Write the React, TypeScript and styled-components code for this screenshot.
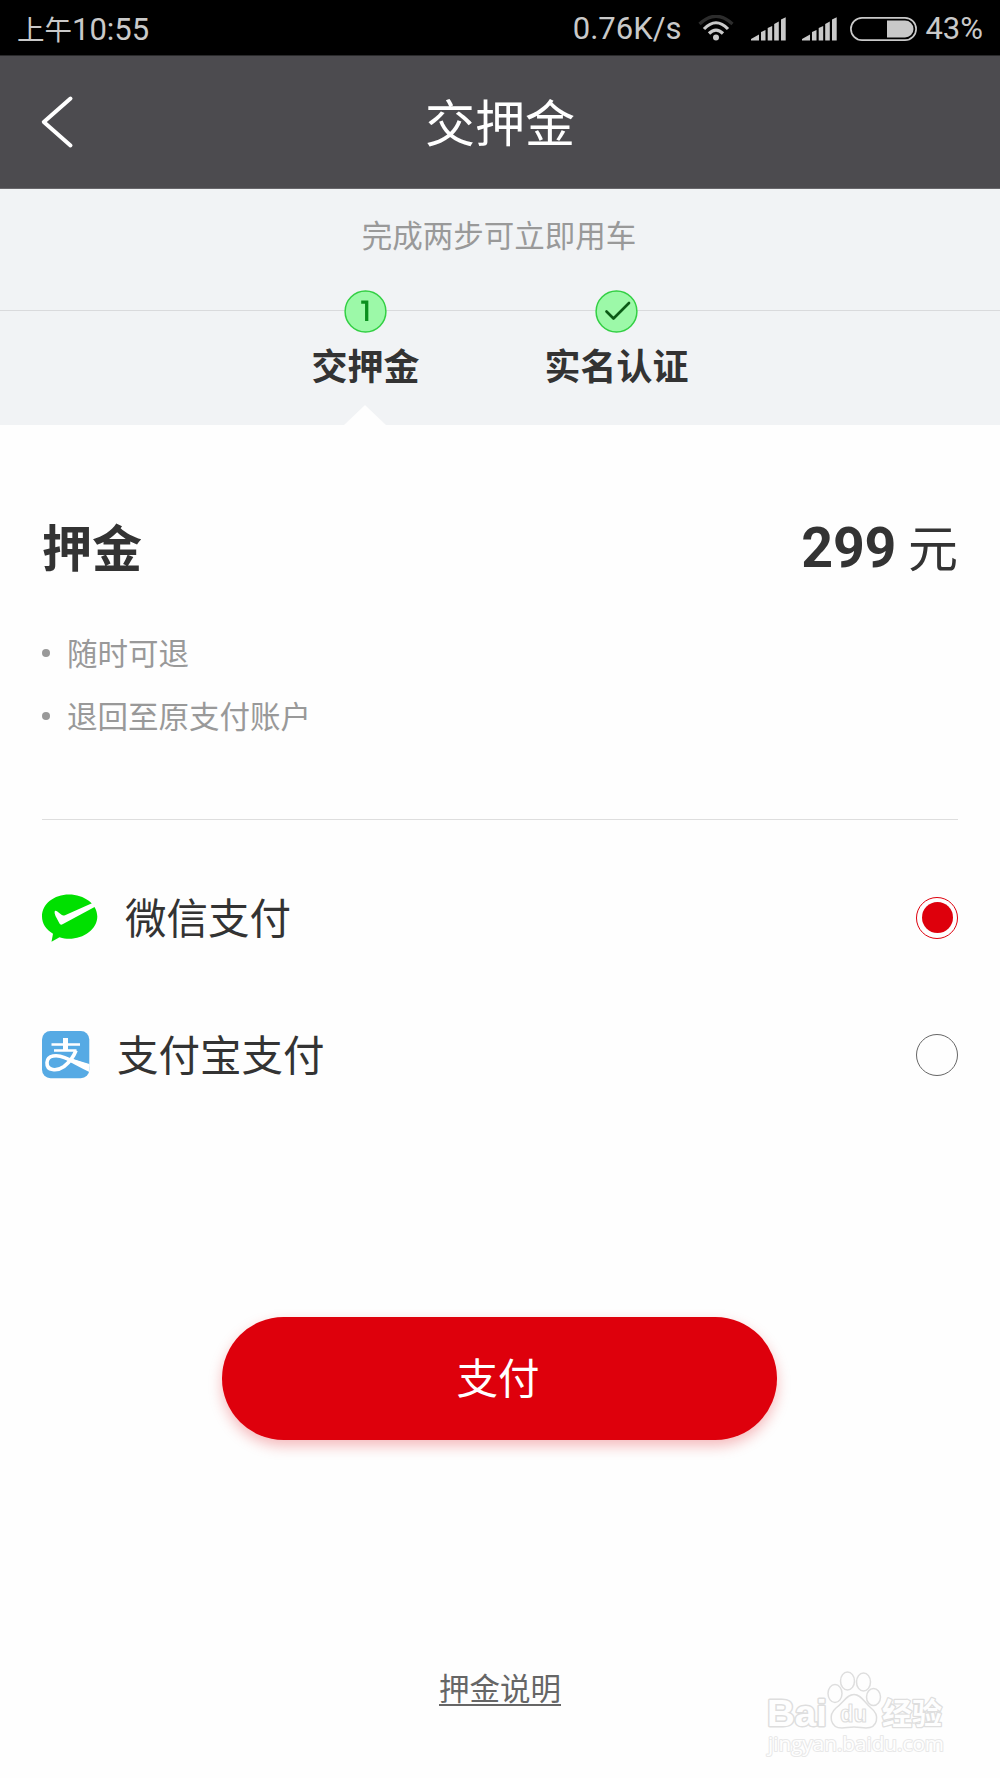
import React, { useState } from "react";
import styled, { createGlobalStyle } from "styled-components";

const Global = createGlobalStyle`
  * { box-sizing: border-box; }
  body {
    margin: 0;
    background: #fefefe;
    color: #333;
    font-family: "Noto Sans CJK SC", sans-serif;
  }
  button { font-family: inherit; border: 0; background: none; padding: 0; margin: 0; color: inherit; }
`;

const Screen = styled.div`
  position: relative;
  width: 1000px;
  height: 1778px;
  display: flex;
  flex-direction: column;
  overflow: hidden;
  background: #fefefe;
`;

const StatusBar = styled.div`
  height: 56px;
  background: #000;
  border-bottom: 1px solid #29292b;
  color: #c9c9c9;
  display: flex;
  align-items: center;
  justify-content: space-between;
  padding: 2px 17px 0 17px;
  font-family: Roboto, "Noto Sans CJK SC", sans-serif;
  font-size: 31px;
  line-height: 54px;
`;

const Clock = styled.div`
  display: flex;
  align-items: baseline;
  padding-top: 3px;
`;

const Meridiem = styled.span`
  font-size: 27.5px;
`;

const StatusGroup = styled.div`
  display: flex;
  align-items: center;
`;

const StatusText = styled.span<{ $gap?: number }>`
  margin-right: ${(p) => p.$gap ?? 0}px;
  padding-top: 1px;
  white-space: nowrap;
`;

const StatusIcon = styled.svg<{ $gap: number }>`
  display: block;
  margin-right: ${(p) => p.$gap}px;
`;

const Header = styled.header`
  height: 133px;
  background: #4c4b4f;
  border-bottom: 1px solid #68676b;
  color: #fff;
  display: grid;
  grid-template-columns: 120px 1fr 120px;
  align-items: center;
`;

const BackButton = styled.button`
  padding-left: 39px;
  height: 100%;
  display: flex;
  align-items: center;
`;

const Title = styled.h1`
  margin: 0 0 5px;
  font-size: 50px;
  font-weight: 400;
  line-height: 72px;
  text-align: center;
`;

const Steps = styled.section`
  height: 236px;
  background: #f1f3f5;
  display: flex;
  flex-direction: column;
  align-items: center;
`;

const Hint = styled.p`
  margin: 23px 2px 0 0;
  font-size: 30.5px;
  line-height: 44px;
  color: #999;
`;

const Track = styled.div`
  width: 100%;
  margin-top: 34px;
  padding-right: 19px;
  display: flex;
  justify-content: center;
  gap: 51px;
  background: linear-gradient(#d9dadc, #d9dadc) 0 20px / 100% 1px no-repeat;
`;

const Step = styled.div`
  width: 200px;
  height: 135px;
  display: flex;
  flex-direction: column;
  align-items: center;
`;

const StepMark = styled.svg`
  display: block;
`;

const StepLabel = styled.div`
  margin-top: 5px;
  padding-left: 1px;
  font-size: 36px;
  line-height: 52px;
  font-weight: 700;
  white-space: nowrap;
`;

const Pointer = styled.div`
  margin-top: auto;
  border: 21px solid transparent;
  border-top: 0;
  border-bottom: 20px solid #fefefe;
`;

const Content = styled.main`
  flex: 1;
  padding: 0 42px;
  display: flex;
  flex-direction: column;
`;

const AmountRow = styled.div`
  margin-top: 83px;
  height: 74px;
  display: flex;
  justify-content: space-between;
  align-items: baseline;
  font-size: 50px;
  line-height: 74px;
`;

const AmountLabel = styled.span`
  font-weight: 700;
`;

const Figure = styled.b`
  font-family: Roboto, sans-serif;
  font-size: 55.5px;
  letter-spacing: -0.3px;
  margin-right: 12px;
`;

const Notes = styled.ul`
  list-style: none;
  margin: 39px 0 0;
  padding: 0;
  color: #999;
  font-size: 30.5px;
  line-height: 63px;
`;

const Note = styled.li`
  display: flex;
  align-items: center;
  gap: 17px;
  &::before {
    content: "";
    width: 8px;
    height: 8px;
    border-radius: 50%;
    background: #999;
  }
`;

const Divider = styled.hr`
  width: 100%;
  height: 1px;
  margin: 72px 0 29px;
  border: 0;
  background: #dedede;
`;

const Option = styled.button`
  height: 137px;
  display: flex;
  align-items: center;
  text-align: left;
  font-size: 41.5px;
`;

const OptionName = styled.span<{ $gap: number }>`
  margin-left: ${(p) => p.$gap}px;
  padding-bottom: 3px;
  flex: 1;
`;

const Radio = styled.span<{ $on: boolean }>`
  width: 42px;
  height: 42px;
  border-radius: 50%;
  border: 1.5px solid ${(p) => (p.$on ? "#de000c" : "#666")};
  display: grid;
  place-items: center;
  &::after {
    content: "";
    width: 31px;
    height: 31px;
    border-radius: 50%;
    background: ${(p) => (p.$on ? "#de000c" : "transparent")};
  }
`;

const PayButton = styled.button`
  width: 555px;
  height: 123px;
  margin-top: 194px;
  margin-left: 180px;
  padding: 0 3px 5px 0;
  border-radius: 62px;
  background: #de000c;
  box-shadow: 0 6px 14px rgba(222, 0, 12, 0.27);
  color: #fff;
  font-size: 41.5px;
`;

const TermsLink = styled.a`
  align-self: center;
  margin-top: 230px;
  font-size: 30.5px;
  line-height: 34px;
  color: #666;
  border-bottom: 2px solid #666;
`;

const Watermark = styled.svg`
  position: absolute;
  left: 760px;
  top: 1664px;
`;

const Wifi = () => (
  <StatusIcon $gap={17} width="36" height="28" viewBox="0 1 36 28" fill="none" strokeWidth="3.2">
    <path d="M1.500 10 Q18 -5.500 34.500 10" stroke="#2c2c2c" />
    <path d="M6 15 Q18 2.500 30 15" stroke="#c9c9c9" />
    <path d="M11 19.500 Q18 12.500 25 19.500" stroke="#c9c9c9" />
    <circle cx="18" cy="23.500" r="3" fill="#c9c9c9" />
  </StatusIcon>
);

const Signal = ({ gap }: { gap: number }) => (
  <StatusIcon $gap={gap} width="35" height="24" viewBox="0 0.5 35 24" fill="#c9c9c9">
    <path d="M0 22.500 L8 18 V24 H0Z M10 15.500 L14.500 13.500 V24 H10Z M16.700 11.500 L21.200 9.500 V24 H16.700Z M23.200 7.500 L27.800 5 V24 H23.200Z M30 3 L34.700 0.800 V24 H30Z" />
  </StatusIcon>
);

const Battery = () => (
  <StatusIcon $gap={8} width="67" height="24" viewBox="0 0 67 24">
    <rect x="0.900" y="0.900" width="65.200" height="22.200" rx="11.100" fill="none" stroke="#c9c9c9" strokeWidth="1.700" />
    <path d="M37 3.500 H55 A8.500 8.500 0 0 1 55 20.500 H37Z" fill="#c9c9c9" />
  </StatusIcon>
);

const WeChatIcon = () => (
  <svg width="56" height="48" viewBox="0.5 0 56 48">
    <path
      d="M27.500 0.500 C42.500 0.500 55.800 10 55.800 22.500 C55.800 35 42.500 44.800 27.500 44.800 C24.500 44.800 21.500 44.300 18 43.200 L10 47.800 L11.500 39.700 C4.500 35.500 0.500 29.500 0.500 22.500 C0.500 10 12.500 0.500 27.500 0.500Z"
      fill="#00e000"
    />
    <path
      d="M13.300 17 Q12.500 19 14 22 L18 29.500 Q19 31.500 21.500 30 L54 12.500 L51 9 L23.500 21.200 Q21.500 22 20 20.800 L15.500 17.200 Q14.200 16.200 13.300 17Z"
      fill="#fefefe"
    />
  </svg>
);

const AlipayIcon = () => (
  <svg width="48" height="48" viewBox="0 0 48 48">
    <rect width="47.300" height="47.300" rx="8.500" fill="#56aae4" />
    <g fill="none" stroke="#fff">
      <path d="M9.500 13.500 H38 M12 19.500 H34.500" strokeWidth="2.600" />
      <path d="M23.500 7 V19" strokeWidth="5" />
      <path d="M34 19.500 C31.500 26 27 31.500 22 35.500 C15 40.500 4.500 40 5 31.500 C5.500 24 15 23.500 22.500 26.700 C30 30 37 32.500 47.300 35.500" strokeWidth="3.600" />
    </g>
    <path d="M31 28 L47.300 33 V41 Q40 37.500 28 31Z" fill="#fff" />
  </svg>
);

const StepCircle = ({ done }: { done?: boolean }) => (
  <StepMark width="43" height="43" viewBox="0 0 43 43">
    <circle cx="21.500" cy="21.500" r="20.400" fill="#9cf9a8" stroke="#33d044" strokeWidth="1.500" />
    {done ? (
      <path d="M11.500 21.500 L18.500 28.500 L34 13" fill="none" stroke="#0b5a16" strokeWidth="2.700" strokeLinecap="round" strokeLinejoin="round" />
    ) : (
      <path d="M17.200 12.200 H22.700 V31" fill="none" stroke="#0a8f1e" strokeWidth="3.300" />
    )}
  </StepMark>
);

export default function App() {
  const [method, setMethod] = useState("wechat");
  return (
    <>
      <Global />
      <Screen>
        <StatusBar>
          <Clock>
            <Meridiem>上午</Meridiem>
            <StatusText>10:55</StatusText>
          </Clock>
          <StatusGroup>
            <StatusText $gap={17}>0.76K/s</StatusText>
            <Wifi />
            <Signal gap={16} />
            <Signal gap={13} />
            <Battery />
            <StatusText>43%</StatusText>
          </StatusGroup>
        </StatusBar>

        <Header>
          <BackButton aria-label="返回">
            <svg width="36" height="54" viewBox="0 0 36 54" fill="none" stroke="#fff" strokeWidth="4" strokeLinecap="round" strokeLinejoin="round">
              <path d="M31.500 3.500 L4.800 27 L31.500 50.500" />
            </svg>
          </BackButton>
          <Title>交押金</Title>
        </Header>

        <Steps>
          <Hint>完成两步可立即用车</Hint>
          <Track>
            <Step>
              <StepCircle />
              <StepLabel>交押金</StepLabel>
              <Pointer />
            </Step>
            <Step>
              <StepCircle done />
              <StepLabel>实名认证</StepLabel>
            </Step>
          </Track>
        </Steps>

        <Content>
          <AmountRow>
            <AmountLabel>押金</AmountLabel>
            <span>
              <Figure>299</Figure>元
            </span>
          </AmountRow>
          <Notes>
            <Note>随时可退</Note>
            <Note>退回至原支付账户</Note>
          </Notes>
          <Divider />
          <Option onClick={() => setMethod("wechat")}>
            <WeChatIcon />
            <OptionName $gap={27}>微信支付</OptionName>
            <Radio $on={method === "wechat"} />
          </Option>
          <Option onClick={() => setMethod("alipay")}>
            <AlipayIcon />
            <OptionName $gap={27}>支付宝支付</OptionName>
            <Radio $on={method === "alipay"} />
          </Option>
          <PayButton>支付</PayButton>
          <TermsLink>押金说明</TermsLink>
        </Content>

        <Watermark width="200" height="110" viewBox="0 0 200 110" fill="#fefefe" stroke="#dedede" strokeWidth="1.500" strokeLinejoin="round">
          <g fontWeight="700" paintOrder="stroke">
            <text x="7" y="61.500" fontSize="37" textLength="60" lengthAdjust="spacingAndGlyphs" fontFamily="Liberation Sans, sans-serif" strokeWidth="3">Bai</text>
            <text x="122" y="60" fontSize="30" textLength="60" fontFamily="Noto Sans CJK SC, sans-serif" strokeWidth="2.600">经验</text>
          </g>
          <ellipse cx="75" cy="29.500" rx="7" ry="9" />
          <ellipse cx="87.500" cy="17" rx="7" ry="9" />
          <ellipse cx="103.500" cy="18" rx="7" ry="9" />
          <ellipse cx="113.500" cy="33" rx="7" ry="8.500" />
          <path d="M94 30.500 C101 30.500 104 38 111 44 C120 51 118 64 106 64 C102 64 99 63 94 63 C89 63 86 64 82 64 C70 64 68 51 76 44 C84 38 87 30.500 94 30.500Z" />
          <text x="80" y="58" fontFamily="Liberation Sans, sans-serif" fontSize="24" textLength="27" lengthAdjust="spacingAndGlyphs" fontWeight="700" strokeWidth="1.200">du</text>
          <text x="8" y="87" fontFamily="Open Sans, sans-serif" fontSize="20" textLength="176" lengthAdjust="spacingAndGlyphs" paintOrder="stroke" stroke="#e8e8e8" strokeWidth="2">jingyan.baidu.com</text>
        </Watermark>
      </Screen>
    </>
  );
}
